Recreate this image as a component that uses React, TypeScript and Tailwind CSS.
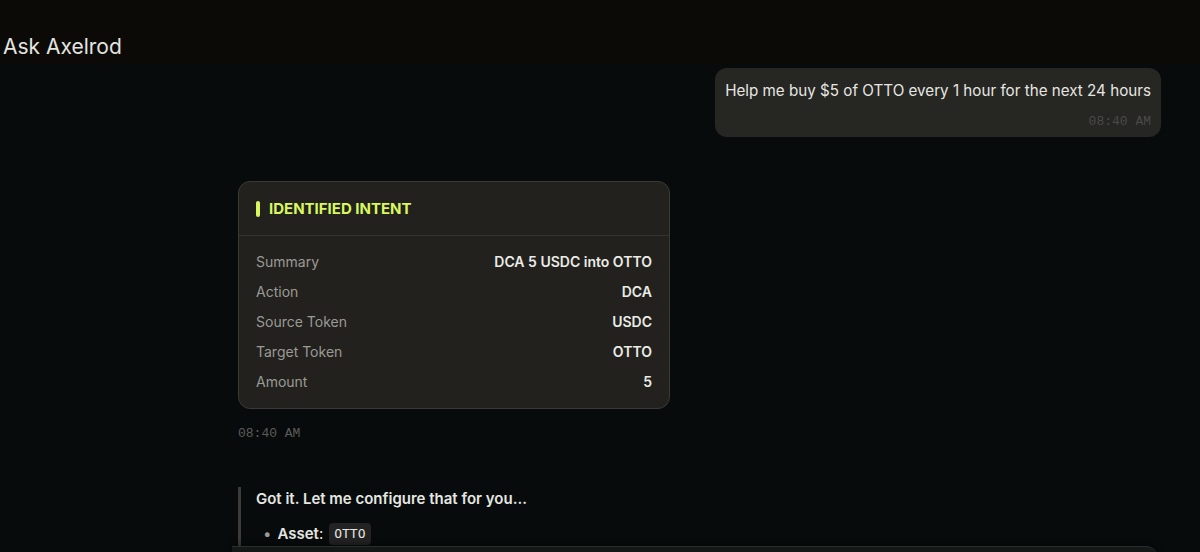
import { ReactNode } from 'react';

interface IntentRow {
  label: string;
  value: string;
}

const intentRows: IntentRow[] = [
  { label: 'Summary', value: 'DCA 5 USDC into OTTO' },
  { label: 'Action', value: 'DCA' },
  { label: 'Source Token', value: 'USDC' },
  { label: 'Target Token', value: 'OTTO' },
  { label: 'Amount', value: '5' },
];

function Timestamp({ children, className = '' }: { children: ReactNode; className?: string }) {
  return (
    <div className={`font-['Liberation_Mono',monospace] text-[13px] leading-4 ${className}`}>
      {children}
    </div>
  );
}

function UserBubble() {
  return (
    <div className="flex justify-end">
      <div className="rounded-xl bg-[#262623] px-[10px] pt-3 pb-[7px]">
        <p className="text-[15.2px] leading-[22px] text-[#e6e6e1]">
          Help me buy $5 of OTTO every 1 hour for the next 24 hours
        </p>
        <Timestamp className="mt-3 text-right text-[#4b4b48]">08:40 AM</Timestamp>
      </div>
    </div>
  );
}

function IntentCard() {
  return (
    <div className="w-[432px] rounded-xl border border-[#3a3935] bg-[#22211e]">
      <div className="flex items-center gap-[9px] border-b border-[#34332f] px-[17px] pt-[17px] pb-[16px]">
        <span className="h-4 w-1 rounded-full bg-[#d9f75e]" />
        <span className="text-[15px] font-bold leading-5 text-[#d9f75e]">IDENTIFIED INTENT</span>
      </div>
      <div className="flex flex-col gap-[10px] px-[17px] py-4">
        {intentRows.map(row => (
          <div key={row.label} className="flex justify-between text-[14px] leading-5">
            <span className="text-[#9b9a95]">{row.label}</span>
            <span className="font-semibold text-[#ebebe6]">{row.value}</span>
          </div>
        ))}
      </div>
    </div>
  );
}

function AssistantReply() {
  return (
    <div className="mt-[45px] border-l-[3px] border-[#3c3c3a] pl-[15px] pt-[2px] pb-6">
      <p className="text-[15px] font-semibold leading-5 text-[#e6e6e1]">Got it. Let me configure that for you...</p>
      <ul className="mt-[14px] pl-[7px] text-[15px] leading-[22px] text-[#e6e6e1]">
        <li className="flex items-center">
          <span className="mr-[6px] text-[#9a9a96]">•</span>
          <span className="font-semibold">Asset</span>
          <span className="mr-[6px]">:</span>
          <code className="rounded-[4px] bg-[#232323] px-[5px] py-[2px] font-['DejaVu_Sans_Mono',monospace] text-[13px] leading-[18px] text-[#e6e6e1]">
            OTTO
          </code>
        </li>
      </ul>
    </div>
  );
}

export default function App() {
  return (
    <div className="relative h-[552px] w-[1200px] overflow-hidden bg-[#070b0c] font-['Inter','Noto_Sans',sans-serif]">
      <header className="flex h-16 items-end bg-[#0b0a07] pb-[3px] pl-[3px]">
        <h1 className="text-[21px] leading-7 text-[#e4e4e0]">Ask Axelrod</h1>
      </header>

      <main className="pl-[238px] pr-[39px] pt-1">
        <UserBubble />
        <div className="mt-[44px]">
          <IntentCard />
          <Timestamp className="mt-[17px] text-[#5c5c59]">08:40 AM</Timestamp>
        </div>
        <AssistantReply />
      </main>

      {/* composer peeking in at the bottom */}
      <div className="absolute left-[232px] right-[42px] top-[546px] h-10 rounded-tr-xl border-t border-[#2a2e2c] bg-[#141816] shadow-[0_-2px_6px_rgba(0,0,0,0.4)]" />
    </div>
  );
}
